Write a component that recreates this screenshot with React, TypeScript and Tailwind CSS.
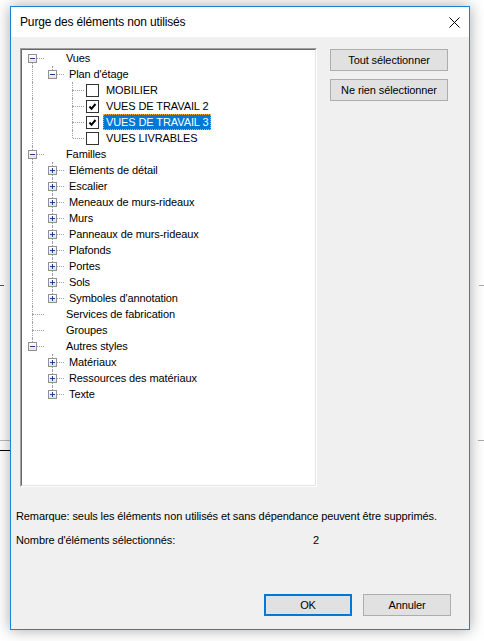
import React from 'react';

type Node = {
  label: string;
  open?: boolean;
  expandable?: boolean;
  check?: boolean;
  selected?: boolean;
  children?: Node[];
};

type FlatRow = {
  node: Node;
  level: number;
  guides: boolean[];
  hasNext: boolean;
  topLine: boolean;
};

const closed = (label: string): Node => ({ label, expandable: true });

const tree: Node[] = [
  {
    label: 'Vues',
    open: true,
    expandable: true,
    children: [
      {
        label: "Plan d'étage",
        open: true,
        expandable: true,
        children: [
          { label: 'MOBILIER', check: false },
          { label: 'VUES DE TRAVAIL 2', check: true },
          { label: 'VUES DE TRAVAIL 3', check: true, selected: true },
          { label: 'VUES LIVRABLES', check: false },
        ],
      },
    ],
  },
  {
    label: 'Familles',
    open: true,
    expandable: true,
    children: [
      closed('Eléments de détail'),
      closed('Escalier'),
      closed('Meneaux de murs-rideaux'),
      closed('Murs'),
      closed('Panneaux de murs-rideaux'),
      closed('Plafonds'),
      closed('Portes'),
      closed('Sols'),
      closed("Symboles d'annotation"),
    ],
  },
  { label: 'Services de fabrication' },
  { label: 'Groupes' },
  {
    label: 'Autres styles',
    open: true,
    expandable: true,
    children: [closed('Matériaux'), closed('Ressources des matériaux'), closed('Texte')],
  },
];

function flatten(nodes: Node[], level: number, guides: boolean[], out: FlatRow[]) {
  nodes.forEach((node, i) => {
    const hasNext = i < nodes.length - 1;
    out.push({ node, level, guides, hasNext, topLine: !(level === 0 && i === 0) });
    if (node.open && node.children) flatten(node.children, level + 1, [...guides, hasNext], out);
  });
  return out;
}

const rows = flatten(tree, 0, [], []);

function Expander({ open }: { open: boolean }) {
  return (
    <div className="absolute left-[6px] top-[4px] w-[9px] h-[9px] border border-[#919191] bg-gradient-to-b from-white to-[#e4e4e4]">
      <div className="absolute left-[1px] top-[3px] w-[5px] h-px bg-[#1e3f8a]" />
      {!open && <div className="absolute left-[3px] top-[1px] w-px h-[5px] bg-[#1e3f8a]" />}
    </div>
  );
}

function CheckBox({ checked }: { checked: boolean }) {
  return (
    <div className="w-[13px] h-[13px] border border-[#333333] bg-white shrink-0 flex items-center justify-center">
      {checked && (
        <svg width="9" height="9" viewBox="0 0 9 9">
          <path d="M1.5 4.5 L3.5 6.8 L7.5 2" fill="none" stroke="#000" strokeWidth="2" />
        </svg>
      )}
    </div>
  );
}

function TreeRow({ row }: { row: FlatRow }) {
  const { node, level } = row;
  return (
    <div className="flex items-center h-4">
      {row.guides.map((cont, i) => (
        <div key={i} className="relative w-5 h-4 shrink-0">
          {cont && <div className="absolute left-[10px] top-0 h-4 border-l border-dotted border-[#a0a0a0]" />}
        </div>
      ))}
      <div className="relative w-5 h-4 shrink-0">
        {row.topLine && <div className="absolute left-[10px] top-0 h-2 border-l border-dotted border-[#a0a0a0]" />}
        {row.hasNext && <div className="absolute left-[10px] top-2 h-2 border-l border-dotted border-[#a0a0a0]" />}
        <div className="absolute left-[11px] top-2 w-[11px] border-t border-dotted border-[#a0a0a0]" />
        {node.expandable && <Expander open={!!node.open} />}
      </div>
      {level === 0 && <div className="w-[21px] shrink-0" />}
      {level > 0 && <div className="w-[4px] shrink-0" />}
      {node.check !== undefined && (
        <>
          <CheckBox checked={node.check} />
          <div className="w-[4px] shrink-0" />
        </>
      )}
      <span
        className={
          node.selected
            ? 'px-[2px] h-4 leading-[14px] border border-dotted border-[#f0b040] bg-[#0078d7] text-white whitespace-nowrap'
            : 'px-[2px] h-4 leading-[14px] border border-transparent text-black whitespace-nowrap'
        }
      >
        {node.label}
      </span>
    </div>
  );
}

function Button({ children, primary }: { children: React.ReactNode; primary?: boolean }) {
  return (
    <button
      className={
        primary
          ? 'w-[88px] h-[22px] bg-[#e1e1e1] border-2 border-[#0078d7] text-[11px] text-black'
          : 'w-[88px] h-[22px] bg-[#e1e1e1] border border-[#adadad] text-[11px] text-black'
      }
    >
      {children}
    </button>
  );
}

export default function App() {
  return (
    <div
      className="relative w-[484px] h-[641px] bg-white overflow-hidden"
      style={{ fontFamily: '"Liberation Sans", Arial, sans-serif' }}
    >
      {/* background bits from the desktop behind */}
      <div className="absolute left-0 top-[285px] w-[4px] h-px bg-[#555]" />
      <div className="absolute left-0 top-[440px] w-[10px] h-px bg-[#bbb]" />
      <div className="absolute left-0 top-[450px] w-[10px] h-px bg-black" />
      <div className="absolute left-[479px] top-[285px] w-[5px] h-px bg-[#aaa]" />
      <div className="absolute left-[478px] top-[440px] w-[6px] h-px bg-[#aaa]" />

      <div className="relative ml-[10px] mt-[6px] w-[460px] h-[624px] border border-[#1883d7] bg-[#f0f0f0] flex flex-col shadow-[0_0_14px_rgba(0,0,0,0.35)]">
        {/* title bar */}
        <div className="h-[30px] bg-white flex items-center justify-between pl-[9px] pr-[9px] shrink-0">
          <span className="text-[12px] text-black tracking-[-0.15px]">Purge des éléments non utilisés</span>
          <svg width="11" height="11" viewBox="0 0 11 11">
            <path d="M0.5 0.5 L10.5 10.5 M10.5 0.5 L0.5 10.5" stroke="#000" strokeWidth="1" />
          </svg>
        </div>

        {/* body */}
        <div className="flex-1 flex flex-col pt-[11px] px-[5px] text-[11px] text-black tracking-[-0.1px]">
          <div className="flex ml-[4px]">
            <div className="w-[297px] h-[439px] border-t border-l border-[#a0a0a0] border-r border-b border-r-white border-b-white">
              <div className="w-full h-full border-t border-l border-[#696969] border-r border-b border-r-[#e3e3e3] border-b-[#e3e3e3] bg-white overflow-hidden">
                {rows.map((r, i) => (
                  <TreeRow key={i} row={r} />
                ))}
              </div>
            </div>
            <div className="ml-[13px] mt-[1px] flex flex-col gap-2">
              <button className="w-[118px] h-[22px] bg-[#e1e1e1] border border-[#adadad] text-[11px] text-black">
                Tout sélectionner
              </button>
              <button className="w-[118px] h-[22px] bg-[#e1e1e1] border border-[#adadad] text-[11px] text-black">
                Ne rien sélectionner
              </button>
            </div>
          </div>

          <p className="mt-[23px] leading-[13px]">
            Remarque: seuls les éléments non utilisés et sans dépendance peuvent être supprimés.
          </p>
          <div className="mt-[11px] flex leading-[13px]">
            <span className="w-[297px]">Nombre d'éléments sélectionnés:</span>
            <span>2</span>
          </div>

          <div className="mt-auto mb-[13px] mr-[13px] flex justify-end gap-[11px]">
            <Button primary>OK</Button>
            <Button>Annuler</Button>
          </div>
        </div>
      </div>
    </div>
  );
}
